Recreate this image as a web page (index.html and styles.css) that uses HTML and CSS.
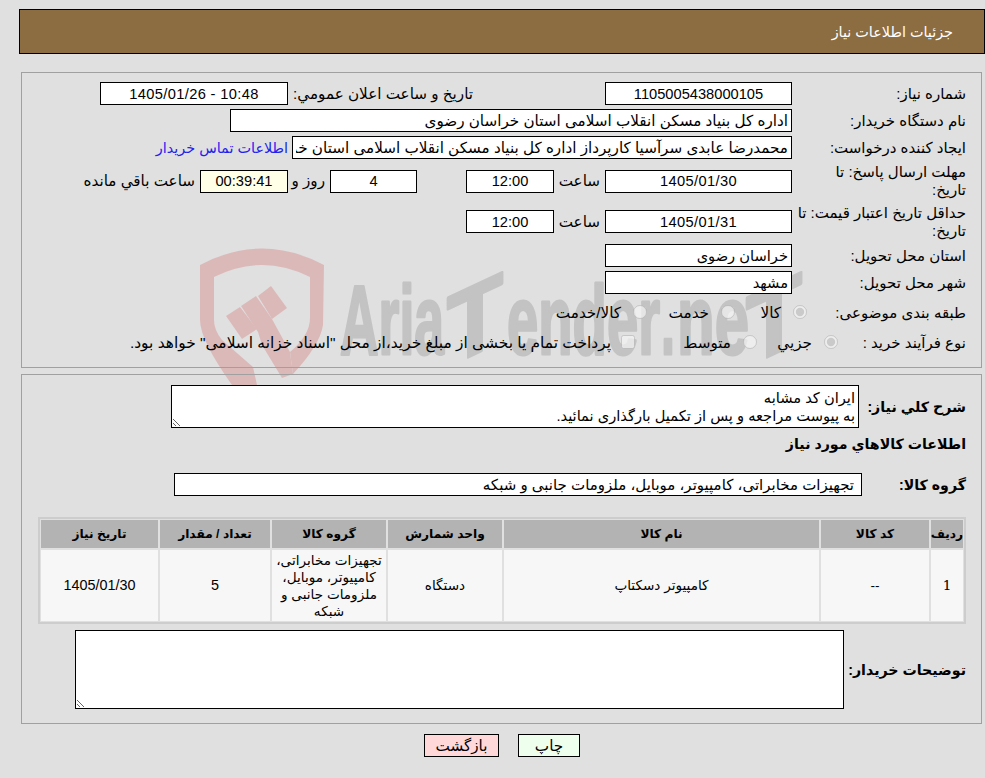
FILE: index.html
```html
<!DOCTYPE html>
<html lang="fa" dir="rtl">
<head>
<meta charset="utf-8">
<title>جزئیات اطلاعات نیاز</title>
<link rel="stylesheet" href="styles.css">
</head>
<body>
<svg class="watermark" dir="ltr" width="985" height="778" viewBox="0 0 985 778" aria-hidden="true">
  <g class="wm-shield">
    <path d="M200 265 Q262 232 324 265 L323 325 Q320 345 293 374 L290 352 Q310 335 310 318 L310 277 Q262 253 214 277 L214 320 Q214 330 222 340 L253 367 L257 385 L232 385 Q200 340 200 320 Z"/>
    <polygon points="226,316 240,307 257,329 242,339"/>
    <polygon points="258,296 271,286 287,308 272,319"/>
    <polygon points="241,306 256,296 272,319 290,352 293,374 282,378 262,345 258,332"/>
  </g>
  <text class="wm-text" x="340" y="354" font-size="98" textLength="104" lengthAdjust="spacingAndGlyphs">Aria</text>
  <text class="wm-text" x="447" y="354" font-size="100" textLength="56" lengthAdjust="spacingAndGlyphs" transform="translate(475 340) skewY(-25) translate(-475 -340)">T</text>
  <text class="wm-text" x="507" y="354" font-size="98" textLength="153" lengthAdjust="spacingAndGlyphs">ender</text>
  <text class="wm-text" x="661" y="354" font-size="98" textLength="14" lengthAdjust="spacingAndGlyphs">.</text>
  <text class="wm-text" x="677" y="354" font-size="98" textLength="72" lengthAdjust="spacingAndGlyphs">ne</text>
  <text class="wm-text" x="746" y="354" font-size="100" textLength="56" lengthAdjust="spacingAndGlyphs" transform="translate(774 340) skewY(-25) translate(-774 -340)">T</text>
</svg>

<header class="page-title">جزئیات اطلاعات نیاز</header>

<section class="panel panel-top">
  <div class="row">
    <div class="label">شماره نیاز:</div>
    <input class="box w187 center digits" readonly value="1105005438000105">
    <div class="text pub-label">تاریخ و ساعت اعلان عمومي:</div>
    <input class="box w188 center digits date" readonly value="10:48 - 1405/01/26">
  </div>
  <div class="row">
    <div class="label">نام دستگاه خریدار:</div>
    <input class="box w562" readonly value="اداره کل بنیاد مسکن انقلاب اسلامی استان خراسان رضوی">
  </div>
  <div class="row">
    <div class="label">ایجاد کننده درخواست:</div>
    <input class="box w500" readonly value="محمدرضا عابدی سرآسیا کارپرداز اداره کل بنیاد مسکن انقلاب اسلامی استان خراسان رضوی">
    <a class="link" href="#">اطلاعات تماس خریدار</a>
  </div>
  <div class="row">
    <div class="label">مهلت ارسال پاسخ: تا<br>تاریخ:</div>
    <input class="box w187 center digits date" readonly value="1405/01/30">
    <div class="text hour">ساعت</div>
    <input class="box w88 center digits" readonly value="12:00">
    <input class="box w87 center days digits" readonly value="4">
    <div class="text day-label">روز و</div>
    <input class="box w88 center timer digits" readonly value="00:39:41">
    <div class="text remain">ساعت باقي مانده</div>
  </div>
  <div class="row row-tall">
    <div class="label">حداقل تاریخ اعتبار قیمت: تا<br>تاریخ:</div>
    <input class="box w187 center digits date" readonly value="1405/01/31">
    <div class="text hour">ساعت</div>
    <input class="box w88 center digits" readonly value="12:00">
  </div>
  <div class="row">
    <div class="label">استان محل تحویل:</div>
    <input class="box w187 short" readonly value="خراسان رضوی">
  </div>
  <div class="row">
    <div class="label">شهر محل تحویل:</div>
    <input class="box w187 short" readonly value="مشهد">
  </div>
  <div class="row row-opt">
    <div class="label label-cat">طبقه بندی موضوعی:</div>
    <label class="opt w72"><input type="radio" name="cat" checked disabled><span>کالا</span></label>
    <label class="opt w88"><input type="radio" name="cat" disabled><span>خدمت</span></label>
    <label class="opt"><input type="radio" name="cat" disabled><span>کالا/خدمت</span></label>
  </div>
  <div class="row row-opt">
    <div class="label label-proc">نوع فرآیند خرید :</div>
    <label class="opt w81"><input type="radio" name="proc" checked disabled><span>جزيي</span></label>
    <label class="opt w122"><input type="radio" name="proc" disabled><span>متوسط</span></label>
    <label class="opt opt-pay"><input type="checkbox" disabled><span>پرداخت تمام یا بخشی از مبلغ خرید،از محل "اسناد خزانه اسلامی" خواهد بود.</span></label>
  </div>
</section>

<section class="panel panel-bottom">
  <div class="row row-desc">
    <div class="label-b lb-desc">شرح كلي نياز:</div>
    <textarea class="area area-desc" readonly>ایران کد مشابه
به پیوست مراجعه و پس از تکمیل بارگذاری نمائید.</textarea>
  </div>
  <h2 class="goods-title">اطلاعات كالاهاي مورد نياز</h2>
  <div class="row row-group">
    <div class="label-b lb-group">گروه کالا:</div>
    <input class="box group-box" readonly value="تجهیزات مخابراتی، کامپیوتر، موبایل، ملزومات جانبی و شبکه">
  </div>
  <table class="items">
    <colgroup>
      <col class="c1"><col class="c2"><col class="c3"><col class="c4"><col class="c5"><col class="c6"><col class="c7">
    </colgroup>
    <thead>
      <tr><th>ردیف</th><th>کد کالا</th><th>نام کالا</th><th>واحد شمارش</th><th>گروه کالا</th><th>تعداد / مقدار</th><th>تاریخ نیاز</th></tr>
    </thead>
    <tbody>
      <tr>
        <td class="cell-serif">1</td>
        <td>--</td>
        <td>کامپیوتر دسکتاپ</td>
        <td>دستگاه</td>
        <td class="tight">تجهیزات مخابراتی، کامپیوتر، موبایل، ملزومات جانبی و شبکه</td>
        <td class="cell-num">5</td>
        <td class="cell-num">1405/01/30</td>
      </tr>
    </tbody>
  </table>
  <div class="row row-notes">
    <div class="label-b lb-notes">توضیحات خریدار:</div>
    <textarea class="area area-notes" readonly></textarea>
  </div>
</section>

<div class="actions">
  <button class="btn btn-print" type="button">چاپ</button>
  <button class="btn btn-back" type="button">بازگشت</button>
</div>
</body>
</html>
```
FILE: styles.css
```css
* { box-sizing: border-box; }
html, body { margin: 0; padding: 0; }
body {
  position: relative;
  background: #e0e0e0;
  color: #000;
  width: 985px;
  height: 778px;
  overflow: hidden;
  font-family: "Liberation Sans", "DejaVu Sans", sans-serif;
  font-size: 15.2px;
  line-height: 18px;
}
.watermark { position: absolute; left: 0; top: 0; z-index: -1; direction: ltr; }
.wm-shield { fill: #dcb9b9; }
.wm-text {
  fill: #c3c3c3;
  stroke: #c3c3c3;
  stroke-width: 3px;
  stroke-linejoin: round;
  font-family: "Liberation Sans", sans-serif;
  font-weight: 700;
}
.page-title {
  height: 45px;
  width: 966px;
  margin-top: 9px;
  background: #8c6d41;
  border: 1px solid #000;
  color: #fff;
  font-size: 14.4px;
  padding: 13px 31px 0 0;
}
.panel {
  width: 961px;
  margin-right: 3px;
  border: 1px solid #a0a0a0;
}
.panel-top { height: 296px; margin-top: 18px; padding: 9px 15px 0 0; }
.panel-bottom { height: 350px; margin-top: 6px; padding: 10px 15px 0 0; }
.row { display: flex; align-items: center; min-height: 23px; margin-bottom: 4px; }
.row-tall { min-height: 37px; }
.row-opt { min-height: 30px; margin-bottom: 0; }
.label { width: 174px; flex: none; font-size: 15px; }
.label-cat { width: 159px; }
.label-proc { width: 128px; }
.box {
  height: 23px;
  flex: none;
  border: 1px solid #000;
  border-radius: 0;
  background: #fff;
  color: #000;
  font: inherit;
  padding: 1px 3px;
  outline: none;
  direction: rtl;
}
.center { text-align: center; }
.digits { font-size: 14.67px; }
.date { letter-spacing: 0.35px; }
.short { font-size: 14.67px; }
.w187 { width: 187px; }
.w188 { width: 188px; }
.w562 { width: 562px; }
.w500 { width: 500px; }
.w88 { width: 88px; }
.w87 { width: 87px; }
.pub-label { margin-right: 132px; width: 185px; }
.link { color: #2222ee; text-decoration: none; margin-right: 4px; font-size: 14.4px; }
.hour { margin-right: 5px; width: 46px; }
.days { margin-right: 49px; }
.day-label { margin-right: 5px; width: 37px; }
.timer { background: #ffffe8; }
.remain { margin-right: 5px; }
.opt { display: flex; align-items: center; gap: 12px; flex: none; }
.opt input { margin: 0; width: 14px; height: 14px; flex: none; position: relative; top: -1px; }
.opt-pay { gap: 10px; font-size: 15.45px; }
.w72 { width: 72px; }
.opt.w88 { width: 88px; }
.w81 { width: 81px; }
.w122 { width: 122px; }
.label-b { font-weight: 700; font-size: 14.2px; flex: none; }
.lb-desc { width: 107px; }
.row-desc { margin-bottom: 7px; }
.area {
  display: block;
  flex: none;
  border: 1px solid #000;
  border-radius: 0;
  background: #fff;
  color: #000;
  font: inherit;
  font-size: 14.67px;
  padding: 3px 3px;
  outline: none;
  overflow: hidden;
  direction: rtl;
}
.area-desc { width: 688px; height: 43px; }
.goods-title { margin: 0; font-size: 14.2px; font-weight: 700; line-height: 18px; }
.row-group { margin-top: 20px; margin-bottom: 21px; }
.lb-group { width: 104px; }
.group-box { width: 688px; padding-right: 7px; font-size: 15px; }
.items {
  table-layout: fixed;
  width: 928px;
  border: 1px solid #cdcdcd;
  box-shadow: inset 0 0 0 1px #cdcdcd;
  border-spacing: 2px;
  border-collapse: separate;
  text-align: center;
  font-size: 13.6px;
}
.c1 { width: 32px; }
.c2 { width: 108px; }
.c3 { width: 315px; }
.c4 { width: 114px; }
.c5 { width: 114px; }
.c6 { width: 110px; }
.c7 { width: 117px; }
.items th { background: #b3b3b3; height: 28px; padding: 0; font-size: 12.2px; font-weight: 700; }
.items td { background: #f7f7f7; height: 71px; padding: 0; line-height: 17px; }
.items .tight { padding: 0 4px; }
.items .cell-num { font-size: 14.4px; }
.items .cell-serif { font-family: "DejaVu Serif", serif; font-size: 13.6px; }
.row-notes { margin-top: 6px; margin-bottom: 0; }
.lb-notes { width: 122px; }
.area-notes { width: 769px; height: 79px; }
.actions { display: flex; flex-direction: row; margin-top: 10px; margin-right: 405px; gap: 19px; }
.btn {
  height: 23px;
  border: 1px solid #000;
  border-radius: 0;
  color: #000;
  font: inherit;
  padding: 0;
}
.btn-print { width: 62px; background: #eeffee; }
.btn-back { width: 75px; background: #ffd9d9; }
```
